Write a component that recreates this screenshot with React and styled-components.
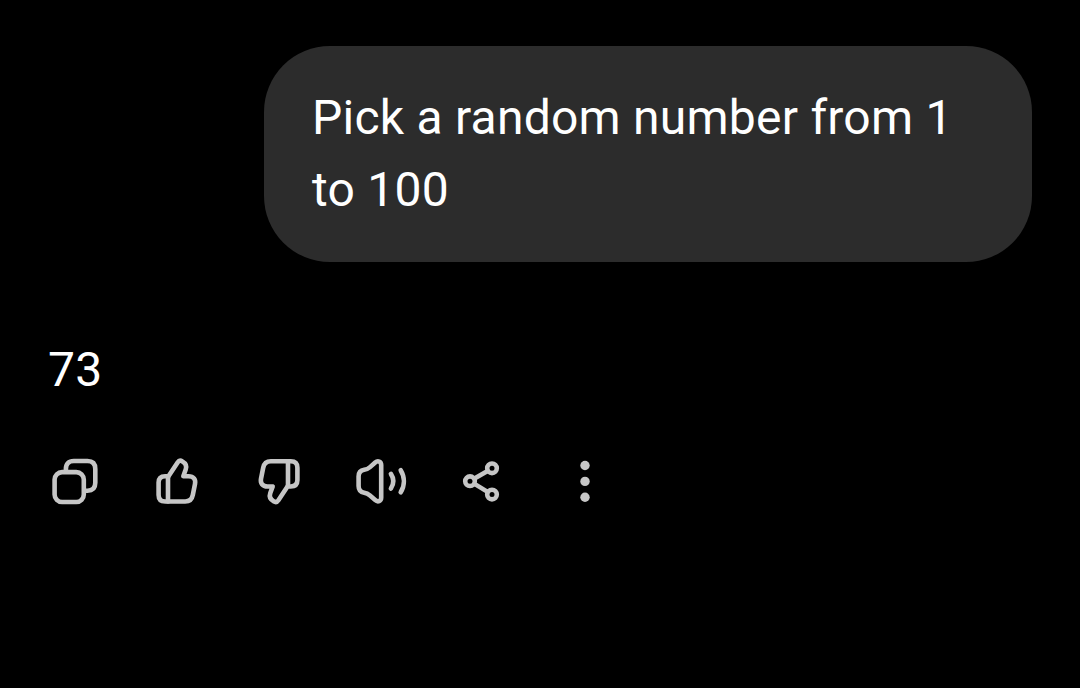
import React from 'react';
import styled, {createGlobalStyle} from 'styled-components';

const GlobalStyle = createGlobalStyle`
    body {
        margin: 0;
        background: #000;
    }
`

const Chat = styled.main`
    box-sizing: border-box;
    display: flex;
    flex-direction: column;
    height: 688px;
    padding: 46px 48px 0;
    background: #000;
    color: #fff;
    font-family: Roboto, sans-serif;
    font-size: 48px;
    line-height: 72px;
    letter-spacing: 0.24px;
`

const UserMessage = styled.div`
    box-sizing: border-box;
    align-self: flex-end;
    width: 768px;
    padding: 36px 48px;
    border-radius: 66px;
    background: #2c2c2c;
`

const Answer = styled.div`
    margin-top: 72px;
`

const Actions = styled.div`
    display: flex;
    gap: 42px;
    margin: 46px 0 0 -3px;
`

const ActionButton = styled.button`
    display: flex;
    width: 60px;
    height: 60px;
    padding: 0;
    border: 0;
    background: none;
    color: #c6c6c6;
    cursor: pointer;
`

const Icon = styled.svg`
    width: 60px;
    height: 60px;
    fill: ${props => props.$solid ? 'currentColor' : 'none'};
    stroke: ${props => props.$solid ? 'none' : 'currentColor'};
    stroke-width: 4.6;
    stroke-linecap: round;
    stroke-linejoin: round;
`

const Thumb = () => <>
    <path d="M21 25 L30.6 10.4 C31.8 8.6 33.6 8.3 35.4 9.4 C38.6 11.2 39.9 14.2 38.7 17.6 L36.3 24.2 H41.5 C46.6 24.2 48.9 27.6 48 32 L45.8 43 C44.9 47.6 42.3 49.5 38.2 49.5 H18.2 C13.6 49.5 11.6 47.3 11.6 43 V30.6 C11.6 26.4 13.6 24.2 18.2 24.2 H21" />
    <path d="M21 25 V49.5" />
</>

const actions = [
    {
        label: 'Copy',
        icon: <>
            <rect x="9.6" y="20.1" width="29.2" height="29.9" rx="7.5" />
            <path d="M20.9 19 V17 C20.9 11.8 23.6 9 28.8 9 H42.5 C47.7 9 50.3 11.8 50.3 17 V30.8 C50.3 36 47.7 38.7 42.5 38.7 H40" />
        </>
    },
    {label: 'Good response', icon: <Thumb />},
    {label: 'Bad response', icon: <g transform="rotate(180 30 29.35)"><Thumb /></g>},
    {
        label: 'Read aloud',
        icon: <>
            <path d="M30.2 13 C30.2 9.4 26.8 8.2 24.2 10.5 L19 15.1 C17 16.8 15.8 17.4 13.2 17.8 C9.2 18.4 7.6 21 7.6 24.5 V34 C7.6 37.6 9.2 40.1 13.2 40.8 C15.8 41.2 17 41.9 19 43.6 L24.2 48.1 C26.8 50.4 30.2 49.2 30.2 45.6 Z" />
            <path d="M39.9 21.9 C42.9 26.4 42.9 32 39.9 36.5" />
            <path d="M49.7 18.2 C53.9 25 53.9 33.5 49.7 40.3" />
        </>
    },
    {
        label: 'Share',
        icon: <>
            <circle cx="39" cy="16.3" r="4.8" />
            <circle cx="17" cy="29.2" r="4.8" />
            <circle cx="39" cy="42.6" r="4.8" />
            <path d="M21.5 26.6 L34.6 18.9 M21.5 31.9 L34.6 39.9" />
        </>
    },
    {
        label: 'More',
        solid: true,
        icon: <>
            <circle cx="30" cy="13.5" r="4.7" />
            <circle cx="30" cy="29.4" r="4.7" />
            <circle cx="30" cy="45.3" r="4.7" />
        </>
    }
]

export default function App() {
    return <>
        <GlobalStyle />
        <Chat>
            <UserMessage>Pick a random number from 1 to 100</UserMessage>
            <Answer>73</Answer>
            <Actions>
                {actions.map(({label, icon, solid}) =>
                    <ActionButton key={label} aria-label={label}>
                        <Icon viewBox="0 0 60 60" $solid={solid}>{icon}</Icon>
                    </ActionButton>
                )}
            </Actions>
        </Chat>
    </>
}
